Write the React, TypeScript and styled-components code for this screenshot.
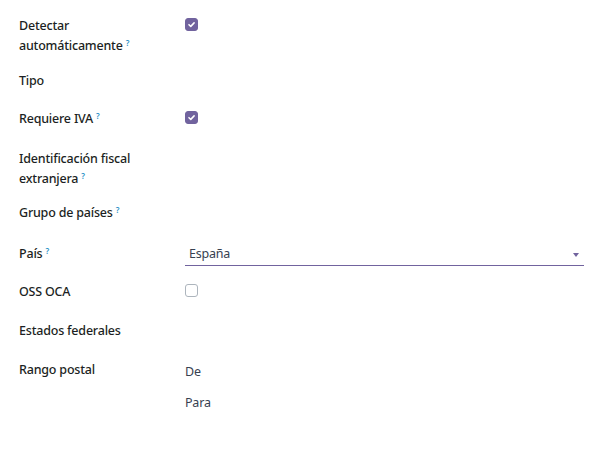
import React from "react";
import styled, { createGlobalStyle } from "styled-components";

const Global = createGlobalStyle`
  html, body { margin: 0; padding: 0; background: #fff; }
  body {
    font-family: "Noto Sans", "Open Sans", sans-serif;
    font-size: 12.5px;
    letter-spacing: -0.2px;
    color: #374151;
  }
`;

const Form = styled.div`
  width: 616px;
  height: 454px;
  box-sizing: border-box;
  padding: 16px 32px 0 19px;
  display: flex;
  flex-direction: column;
`;

const Row = styled.div<{ $h: number }>`
  display: grid;
  grid-template-columns: 166px 1fr;
  min-height: ${(p) => p.$h}px;
  align-items: start;
`;

const Label = styled.div`
  font-weight: 500;
  color: #1c1f23;
  line-height: 20px;
  padding-right: 8px;
`;

const Help = styled.sup`
  font-size: 8px;
  font-weight: 600;
  color: #1f8fc6;
  margin-left: 3px;
  vertical-align: top;
  position: relative;
  top: -3px;
`;

const Field = styled.div`
  display: flex;
  flex-direction: column;
  min-width: 0;
`;

const Check = styled.span<{ $on?: boolean }>`
  display: inline-flex;
  align-items: center;
  justify-content: center;
  width: 13px;
  height: 13px;
  margin-top: 2px;
  box-sizing: border-box;
  border-radius: 3px;
  background: ${(p) => (p.$on ? "#71639e" : "#fff")};
  border: 1px solid ${(p) => (p.$on ? "#71639e" : "#adb5bd")};
`;

const Select = styled.div`
  position: relative;
  height: 22px;
  box-sizing: border-box;
  border-bottom: 1px solid #71639e;
  padding-left: 4px;
  line-height: 20px;
  color: #374151;
`;

const Caret = styled.span`
  position: absolute;
  right: 5px;
  top: 9px;
  width: 0;
  height: 0;
  border-left: 3.5px solid transparent;
  border-right: 3.5px solid transparent;
  border-top: 4px solid #71639e;
`;

const SubLine = styled.div<{ $mt: number }>`
  line-height: 20px;
  margin-top: ${(p) => p.$mt}px;
  color: #374151;
`;

const Tick = () => (
  <svg width="9" height="9" viewBox="0 0 10 10" fill="none">
    <path d="M2.2 5.2 L4.2 7.1 L7.9 3.2" stroke="#fff" strokeWidth="1.7" strokeLinecap="round" strokeLinejoin="round" />
  </svg>
);

const Q = () => <Help>?</Help>;

export default function App() {
  return (
    <>
      <Global />
      <Form>
        <Row $h={55}>
          <Label>
            Detectar automáticamente<Q />
          </Label>
          <Field>
            <Check $on><Tick /></Check>
          </Field>
        </Row>
        <Row $h={38}>
          <Label>Tipo</Label>
          <Field />
        </Row>
        <Row $h={40}>
          <Label>
            Requiere IVA<Q />
          </Label>
          <Field>
            <Check $on><Tick /></Check>
          </Field>
        </Row>
        <Row $h={54}>
          <Label>
            Identificación fiscal extranjera<Q />
          </Label>
          <Field />
        </Row>
        <Row $h={41}>
          <Label>
            Grupo de países<Q />
          </Label>
          <Field />
        </Row>
        <Row $h={38}>
          <Label>
            País<Q />
          </Label>
          <Field>
            <Select>
              España
              <Caret />
            </Select>
          </Field>
        </Row>
        <Row $h={39}>
          <Label>OSS OCA</Label>
          <Field>
            <Check />
          </Field>
        </Row>
        <Row $h={39}>
          <Label>Estados federales</Label>
          <Field />
        </Row>
        <Row $h={60}>
          <Label>Rango postal</Label>
          <Field>
            <SubLine $mt={2}>De</SubLine>
            <SubLine $mt={11}>Para</SubLine>
          </Field>
        </Row>
      </Form>
    </>
  );
}
